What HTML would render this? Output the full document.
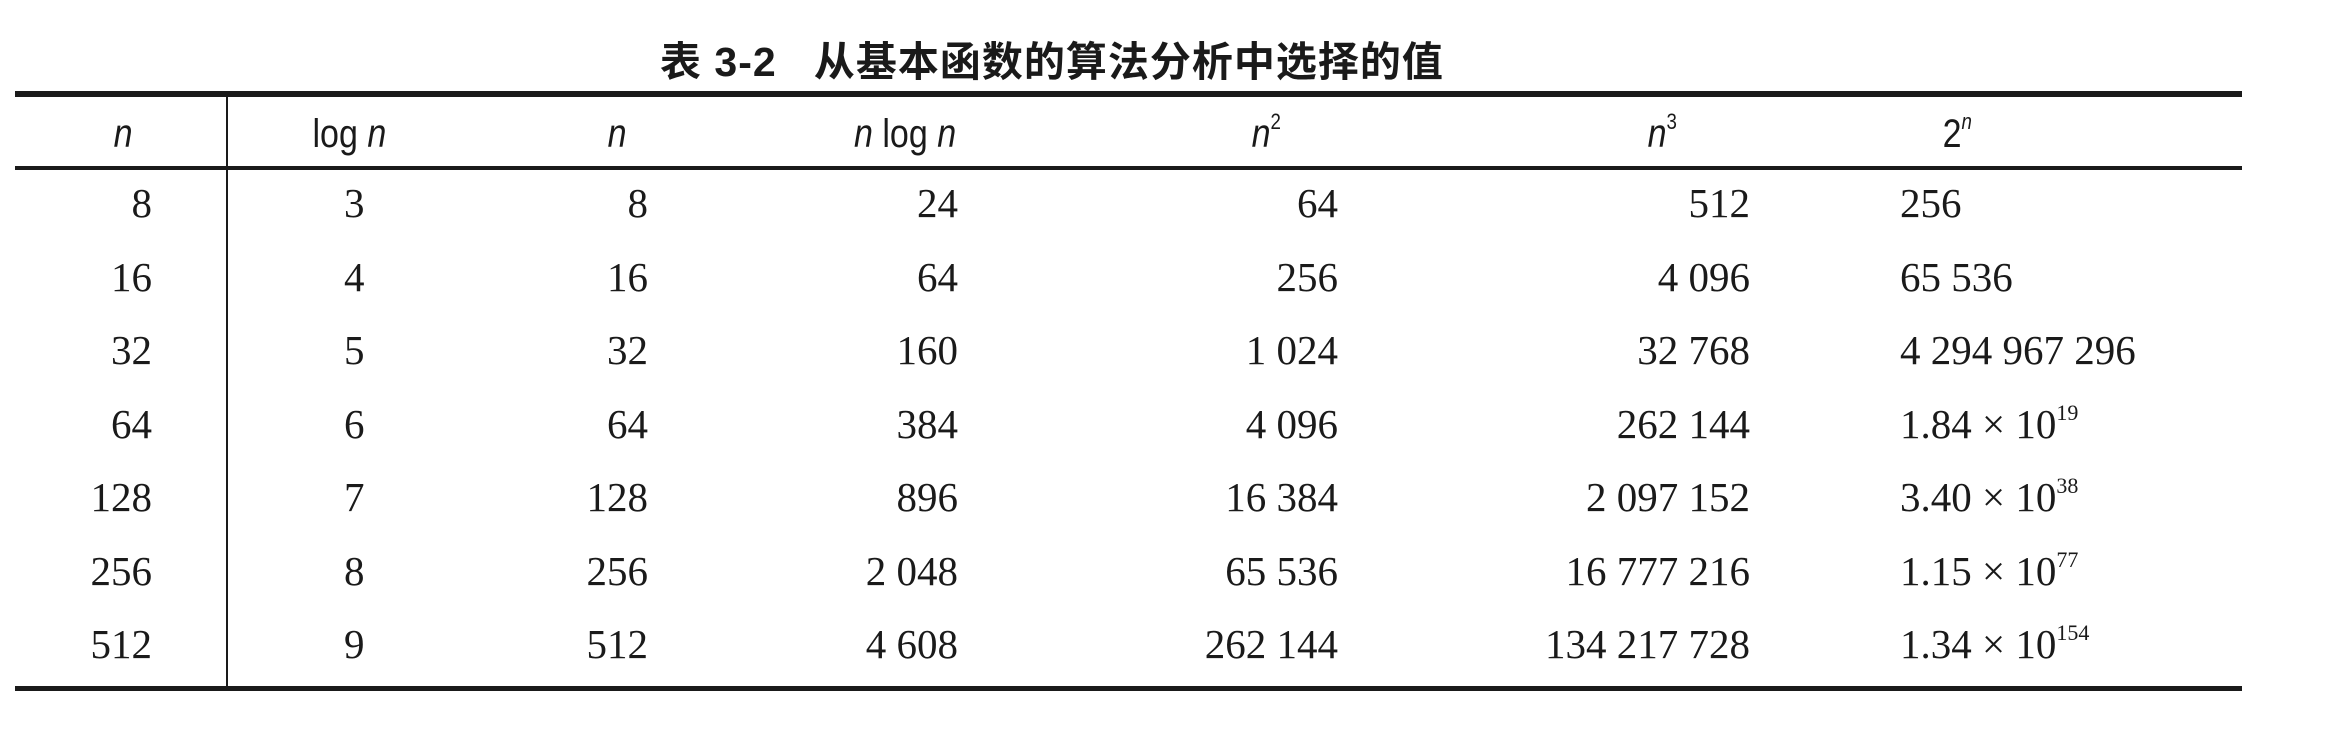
<!DOCTYPE html>
<html><head><meta charset="utf-8"><style>
html,body{margin:0;padding:0;background:#fff;}
body{width:2343px;height:741px;position:relative;overflow:hidden;color:#1a1a1a;}
.t{position:absolute;left:660px;top:28px;font:bold 41px "Liberation Sans","Noto Sans CJK SC",sans-serif;white-space:pre;letter-spacing:1px;}
.rule{position:absolute;left:15px;width:2227px;background:#1a1a1a;}
.v{position:absolute;left:226px;top:96px;width:2px;height:592px;background:#1a1a1a;}
.h{position:absolute;top:110px;font:italic 40px "Liberation Sans",sans-serif;white-space:nowrap;transform:scaleX(0.85);line-height:48px;}
.h .r{font-style:normal;}
.h sup{font-size:22px;position:relative;top:-18px;vertical-align:baseline;line-height:0;}
.n{position:absolute;font:41px "Liberation Serif",serif;white-space:nowrap;line-height:48px;}
.n sup{font-size:22px;position:relative;top:-18px;vertical-align:baseline;line-height:0;}
</style></head><body>
<div class="t">表 3-2   从基本函数的算法分析中选择的值</div>
<div class="rule" style="top:91px;height:6px"></div>
<div class="rule" style="top:166px;height:4px"></div>
<div class="rule" style="top:686px;height:5px"></div>
<div class="v"></div>

<div class="h" style="left:112px">n</div>
<div class="h" style="left:306px"><span class="r">log</span> n</div>
<div class="h" style="left:606px">n</div>
<div class="h" style="left:845px">n <span class="r">log</span> n</div>
<div class="h" style="left:1249px">n<sup class="r">2</sup></div>
<div class="h" style="left:1645px">n<sup class="r">3</sup></div>
<div class="h" style="left:1940px"><span class="r">2</span><sup>n</sup></div>

<div id="rows"></div>
<script>
var data=[
["8","3","8","24","64","512","256"],
["16","4","16","64","256","4 096","65 536"],
["32","5","32","160","1 024","32 768","4 294 967 296"],
["64","6","64","384","4 096","262 144","1.84 × 10<sup>19</sup>"],
["128","7","128","896","16 384","2 097 152","3.40 × 10<sup>38</sup>"],
["256","8","256","2 048","65 536","16 777 216","1.15 × 10<sup>77</sup>"],
["512","9","512","4 608","262 144","134 217 728","1.34 × 10<sup>154</sup>"]];
var rights=[152,null,648,958,1338,1750];
var h="";
for(var i=0;i<7;i++){var y=179+i*73.5;var r=data[i];
for(var c=0;c<7;c++){
 if(c==1){h+='<div class="n" style="top:'+y+'px;left:344px">'+r[c]+'</div>';}
 else if(c==6){h+='<div class="n" style="top:'+y+'px;left:1900px">'+r[c]+'</div>';}
 else{h+='<div class="n" style="top:'+y+'px;right:'+(2343-rights[c])+'px">'+r[c]+'</div>';}
}}
document.getElementById('rows').innerHTML=h;
</script>
</body></html>
